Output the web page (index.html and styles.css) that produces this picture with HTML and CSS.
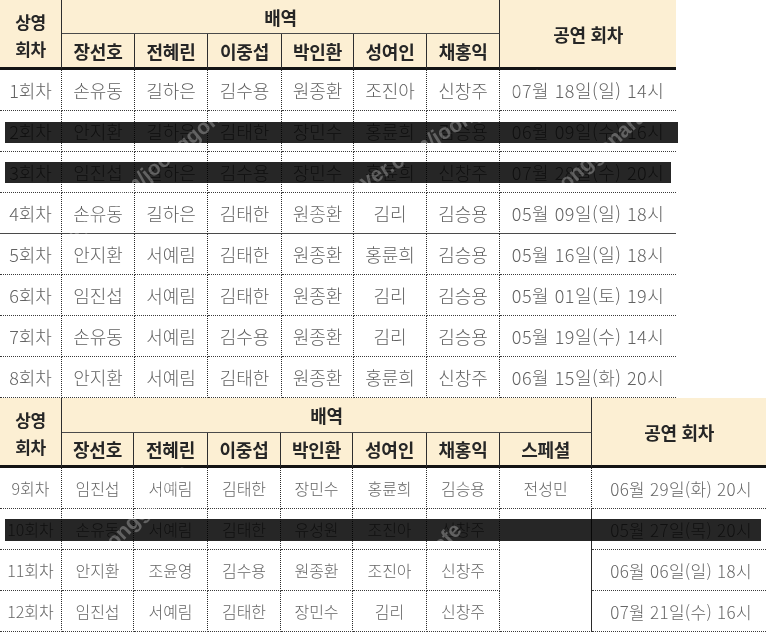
FILE: index.html
```html
<!DOCTYPE html>
<html lang="ko">
<head>
<meta charset="utf-8">
<title>상영 회차 캐스팅</title>
<link rel="stylesheet" href="styles.css">
</head>
<body>
<div class="page">
  <div class="sheet sheet-a">
    <table class="grid grid-a">
      <colgroup>
        <col class="w62"><col class="w73"><col class="w73"><col class="w74"><col class="w72"><col class="w73"><col class="w73"><col class="w176">
      </colgroup>
      <thead>
        <tr class="h1">
          <th rowspan="2" class="no">상영<br>회차</th>
          <th colspan="6" class="role">배역</th>
          <th rowspan="2" class="date">공연 회차</th>
        </tr>
        <tr class="h2">
          <th>장선호</th><th>전혜린</th><th>이중섭</th><th>박인환</th><th>성여인</th><th>채홍익</th>
        </tr>
      </thead>
      <tbody>
        <tr><td>1회차</td><td>손유동</td><td>길하은</td><td>김수용</td><td>원종환</td><td>조진아</td><td>신창주</td><td>07월 18일(일) 14시</td></tr>
        <tr><td>2회차</td><td>안지환</td><td>길하은</td><td>김태한</td><td>장민수</td><td>홍륜희</td><td>김승용</td><td>06월 09일(수) 16시</td></tr>
        <tr><td>3회차</td><td>임진섭</td><td>길하은</td><td>김수용</td><td>장민수</td><td>홍륜희</td><td>신창주</td><td>07월 28일(수) 20시</td></tr>
        <tr class="solid"><td>4회차</td><td>손유동</td><td>길하은</td><td>김태한</td><td>원종환</td><td>김리</td><td>김승용</td><td>05월 09일(일) 18시</td></tr>
        <tr><td>5회차</td><td>안지환</td><td>서예림</td><td>김태한</td><td>원종환</td><td>홍륜희</td><td>김승용</td><td>05월 16일(일) 18시</td></tr>
        <tr><td>6회차</td><td>임진섭</td><td>서예림</td><td>김태한</td><td>원종환</td><td>김리</td><td>김승용</td><td>05월 01일(토) 19시</td></tr>
        <tr><td>7회차</td><td>손유동</td><td>서예림</td><td>김수용</td><td>원종환</td><td>김리</td><td>김승용</td><td>05월 19일(수) 14시</td></tr>
        <tr><td>8회차</td><td>안지환</td><td>서예림</td><td>김태한</td><td>원종환</td><td>홍륜희</td><td>신창주</td><td>06월 15일(화) 20시</td></tr>
      </tbody>
    </table>
    <div class="bar bar-a2"></div>
    <div class="bar bar-a3"></div>
    <span class="wm wm-a1">naver.com/joonggonara</span>
    <span class="wm wm-a2">cafe.naver.com/joonggonara</span>
    <span class="wm wm-a3">joonggonara</span>
  </div>

  <div class="sheet sheet-b">
    <table class="grid grid-b">
      <colgroup>
        <col class="w62"><col class="w72"><col class="w74"><col class="w73"><col class="w72"><col class="w74"><col class="w73"><col class="w92"><col class="w174">
      </colgroup>
      <thead>
        <tr class="h1">
          <th rowspan="2" class="no">상영<br>회차</th>
          <th colspan="7" class="role">배역</th>
          <th rowspan="2" class="date">공연 회차</th>
        </tr>
        <tr class="h2">
          <th>장선호</th><th>전혜린</th><th>이중섭</th><th>박인환</th><th>성여인</th><th>채홍익</th><th>스페셜</th>
        </tr>
      </thead>
      <tbody>
        <tr><td>9회차</td><td>임진섭</td><td>서예림</td><td>김태한</td><td>장민수</td><td>홍륜희</td><td>김승용</td><td>전성민</td><td>06월 29일(화) 20시</td></tr>
        <tr><td>10회차</td><td>손유동</td><td>서예림</td><td>김태한</td><td>유성원</td><td>조진아</td><td>신창주</td><td rowspan="3" class="blank"></td><td>05월 27일(목) 20시</td></tr>
        <tr><td>11회차</td><td>안지환</td><td>조윤영</td><td>김수용</td><td>원종환</td><td>조진아</td><td>신창주</td><td>06월 06일(일) 18시</td></tr>
        <tr><td>12회차</td><td>임진섭</td><td>서예림</td><td>김태한</td><td>장민수</td><td>김리</td><td>신창주</td><td>07월 21일(수) 16시</td></tr>
      </tbody>
    </table>
    <div class="bar bar-b10"></div>
    <span class="wm wm-b1">joonggonara</span>
    <span class="wm wm-b2">cafe</span>
  </div>
</div>
</body>
</html>
```

FILE: styles.css
```css
html, body {
  margin: 0;
  padding: 0;
  background: #ffffff;
}

body {
  font-family: "Noto Sans CJK KR", "Noto Sans", sans-serif;
}

.page {
  width: 766px;
  height: 636px;
  overflow: hidden;
}

.sheet {
  position: relative;
}

.grid {
  border-collapse: separate;
  border-spacing: 0;
  table-layout: fixed;
}

.grid-a { width: 676px; }
.grid-b { width: 766px; }

.w62 { width: 62px; }
.w72 { width: 72px; }
.w73 { width: 73px; }
.w74 { width: 74px; }
.w92 { width: 92px; }
.w174 { width: 174px; }
.w176 { width: 176px; }

.grid th,
.grid td {
  box-sizing: border-box;
  padding: 0;
  text-align: center;
  vertical-align: middle;
  white-space: nowrap;
  overflow: visible;
}

/* header */
.grid th {
  background: #fcefd3;
  color: #262626;
  font-weight: 700;
  font-size: 18px;
  line-height: 1;
  letter-spacing: -0.3px;
}

.grid .h1 th { height: 34px; }
.grid .h2 th { height: 36px; }
.grid-b .h1 th { height: 35px; }
.grid-b .h2 th { height: 35px; }

.grid th.no {
  font-size: 17px;
  line-height: 27px;
  border-right: 1px solid #2e2e2e;
  border-bottom: 3px solid #141414;
  padding-top: 2px;
}

.grid th.role {
  border-right: 1px solid #2e2e2e;
  border-bottom: 1px solid #4a4a4a;
}

.grid th.date {
  border-bottom: 3px solid #141414;
}

.grid .h2 th {
  border-right: 1px solid #2e2e2e;
  border-bottom: 3px solid #141414;
}

/* body */
.grid td {
  height: 41px;
  font-size: 18px;
  font-weight: 300;
  color: #626262;
  line-height: 1;
  border-right: 1px dotted #2a2a2a;
  border-bottom: 1px dotted #3a3a3a;
}

.grid td:last-child {
  border-right: none;
}

.grid-a td:last-child {
  letter-spacing: 0.5px;
}

.grid-a tr.solid td {
  border-bottom: 1px solid #4a4a4a;
}

.grid-b td {
  font-size: 16px;
  color: #666666;
}

.grid-b td:last-child {
  font-size: 17px;
  letter-spacing: 0.3px;
  padding-left: 4px;
}

.grid-b td.blank {
  border-right: 1px solid #2a2a2a;
  background: #ffffff;
}

/* redaction bars */
.bar {
  position: absolute;
  background: #262626;
  mix-blend-mode: multiply;
  height: 21px;
}

.bar-a2 { left: 5px; top: 122px; width: 673px; }
.bar-a3 { left: 5px; top: 162px; width: 666px; }
.bar-b10 { left: 5px; top: 121px; width: 756px; height: 22px; }

/* watermark */
.wm {
  position: absolute;
  font-family: "Liberation Sans", sans-serif;
  font-size: 21px;
  font-weight: 700;
  color: rgba(255, 255, 255, 0.28);
  white-space: nowrap;
  transform-origin: left center;
}

.wm-a1 { left: 60px; top: 235px; transform: rotate(-40deg); }
.wm-a2 { left: 300px; top: 210px; transform: rotate(-32deg); }
.wm-a3 { left: 548px; top: 186px; transform: rotate(-42deg); }
.wm-b1 { left: 96px; top: 148px; transform: rotate(-45deg); }
.wm-b2 { left: 428px; top: 146px; transform: rotate(-45deg); }
```
